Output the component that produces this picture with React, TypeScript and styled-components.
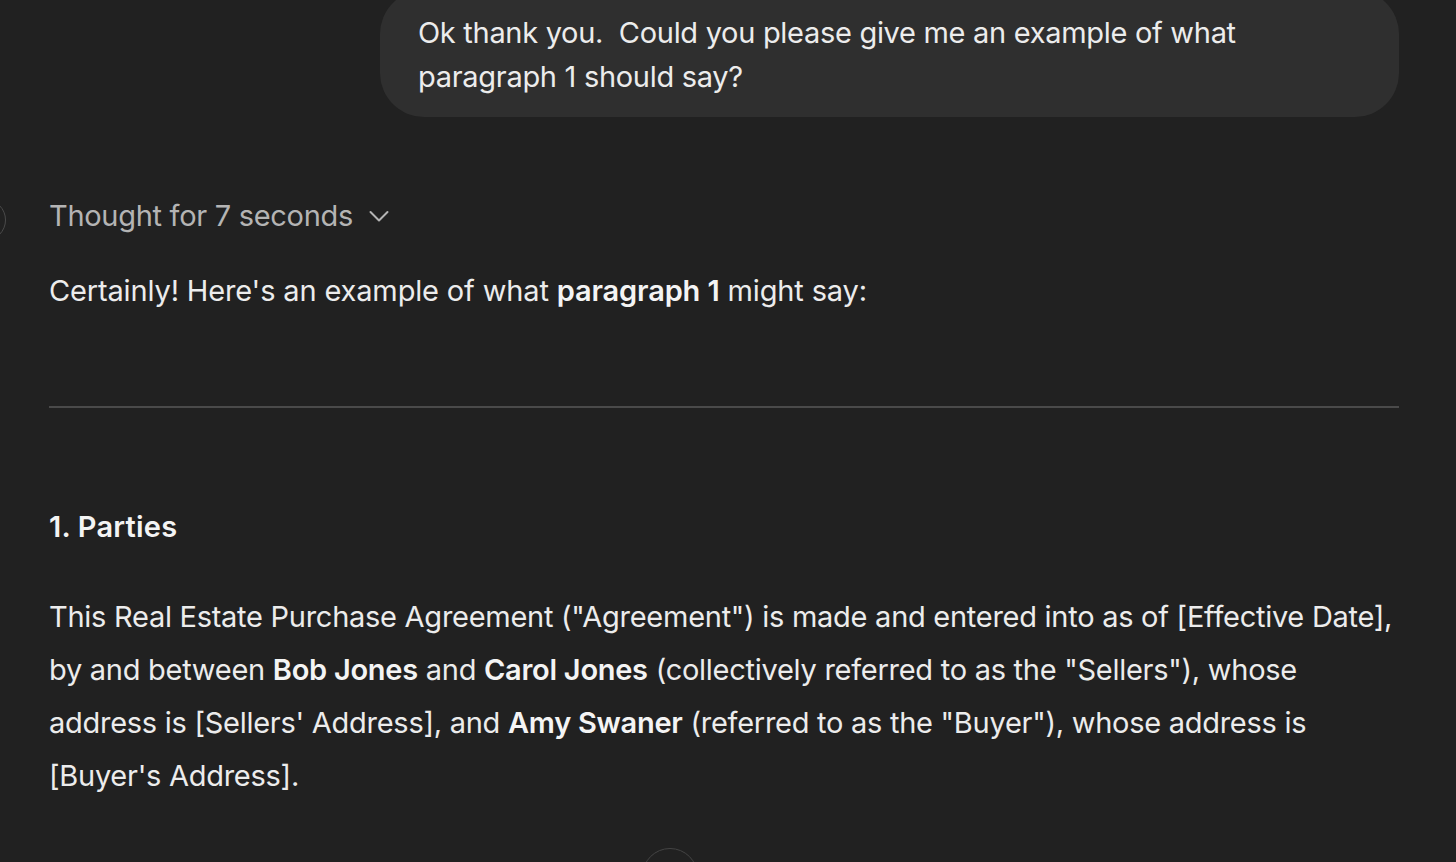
import styled, { createGlobalStyle } from "styled-components";

const GlobalStyle = createGlobalStyle`
  html, body {
    margin: 0;
    padding: 0;
    background: #212121;
    overflow: hidden;
  }
  body {
    font-family: Inter, "Noto Sans", sans-serif;
    color: #ececec;
    letter-spacing: -0.3px;
  }
`;

const Page = styled.div`
  position: relative;
  height: 862px;
  overflow: hidden;
  padding: 0 57px 0 49px;
  display: flex;
  flex-direction: column;
`;

const UserRow = styled.div`
  display: flex;
  justify-content: flex-end;
  margin-top: -10px;
`;

const Bubble = styled.div`
  width: 1019px;
  box-sizing: border-box;
  background: #2f2f2f;
  border-radius: 44px;
  padding: 21px 38px 18px;
  font-size: 29px;
  line-height: 44px;
  white-space: pre-wrap;
`;

const AssistantBlock = styled.div`
  position: relative;
  display: flex;
  flex-direction: column;
`;

const Avatar = styled.div`
  position: absolute;
  left: -85px;
  top: 82px;
  width: 40px;
  height: 40px;
  border-radius: 50%;
  border: 1px solid #4a4a4a;
`;

const Thought = styled.div`
  margin-top: 79px;
  display: flex;
  align-items: center;
  gap: 16px;
  font-size: 29px;
  line-height: 40px;
  color: #b4b4b4;
`;

const Text = styled.p<{ $gap: number }>`
  margin: ${(p) => p.$gap}px 0 0;
  font-size: 29px;
  line-height: 40px;
  color: #ececec;
  letter-spacing: -0.15px;

  strong {
    font-weight: 600;
    color: #f4f4f4;
  }
`;

const Divider = styled.hr`
  margin: 95px 0 0;
  border: none;
  border-top: 2px solid #4a4a4a;
  width: 100%;
`;

const Heading = styled.h3`
  margin: 99px 0 0;
  font-size: 29px;
  line-height: 40px;
  font-weight: 600;
  color: #f4f4f4;
  letter-spacing: 0.2px;
`;

const Body = styled.p`
  margin: 43px 0 0;
  font-size: 29px;
  line-height: 53px;
  color: #ececec;
  letter-spacing: -0.27px;

  strong {
    font-weight: 600;
    color: #f4f4f4;
  }
`;

const ScrollButton = styled.div`
  position: absolute;
  left: 642px;
  top: 848px;
  width: 56px;
  height: 56px;
  box-sizing: border-box;
  border-radius: 50%;
  border: 1.5px solid #444;
  background: #212121;
`;

function Chevron() {
  return (
    <svg width="20" height="13" viewBox="0 0 20 13" fill="none" stroke="#b4b4b4" strokeWidth="2" strokeLinecap="round" strokeLinejoin="round">
      <path d="M1.5 2l8.5 8.5 8.5-8.5" />
    </svg>
  );
}

export default function App() {
  return (
    <>
      <GlobalStyle />
      <Page>
        <UserRow>
          <Bubble>{"Ok thank you.  Could you please give me an example of what paragraph 1 should say?"}</Bubble>
        </UserRow>
        <AssistantBlock>
          <Avatar />
          <Thought>
            Thought for 7 seconds
            <Chevron />
          </Thought>
          <Text $gap={35}>
            Certainly! Here's an example of what <strong>paragraph 1</strong> might say:
          </Text>
          <Divider />
          <Heading>1. Parties</Heading>
          <Body>
            This Real Estate Purchase Agreement ("Agreement") is made and entered into as of [Effective Date],
            by and between <strong>Bob Jones</strong> and <strong>Carol Jones</strong> (collectively referred to as the
            "Sellers"), whose address is [Sellers' Address], and <strong>Amy Swaner</strong> (referred to as the
            "Buyer"), whose address is [Buyer's Address].
          </Body>
        </AssistantBlock>
        <ScrollButton />
      </Page>
    </>
  );
}
